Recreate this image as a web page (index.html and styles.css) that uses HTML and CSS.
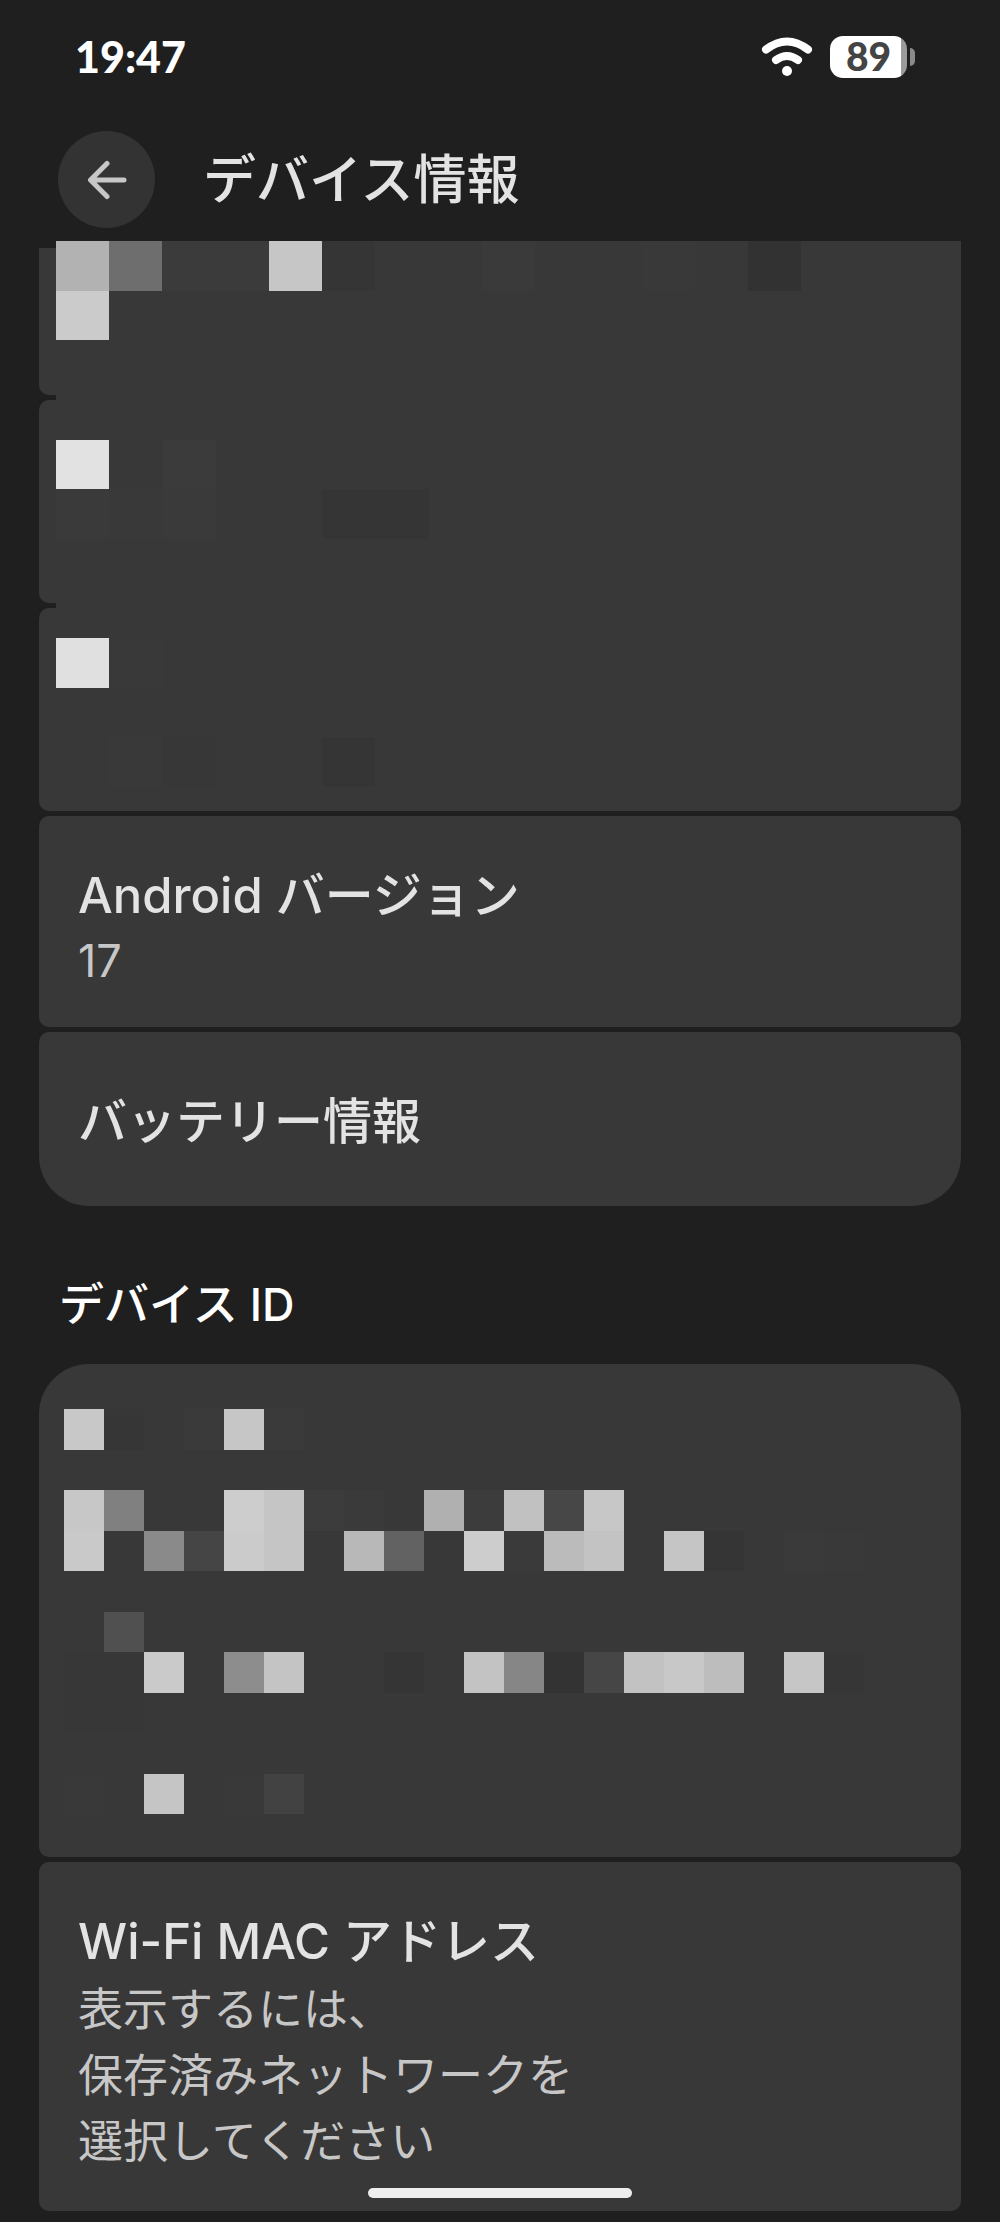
FILE: index.html
```html
<!DOCTYPE html>
<html lang="ja">
<head>
    <meta charset="UTF-8">
    <meta name="viewport" content="width=device-width, initial-scale=1.0">
    <title>デバイス情報</title>
    <link rel="stylesheet" href="styles.css">
</head>
<body>
    <div class="status-bar">
        <span class="clock">19:47</span>
        <div class="status-icons">
            <svg class="wifi" viewBox="0 0 52 40" aria-hidden="true">
                <path d="M5 12.5Q26 -3.500 47 12.5" />
                <path d="M15 23Q26 15 37 23" />
                <circle cx="26" cy="34" r="5" />
            </svg>
            <div class="battery">
                <div class="battery-body">89</div>
                <div class="battery-cap"></div>
            </div>
        </div>
    </div>

    <header class="header">
        <button class="back-button" type="button" aria-label="戻る">
            <svg viewBox="0 0 40 40" aria-hidden="true">
                <path d="M37 20H4M20 3.500L3.500 20L20 36.500" />
            </svg>
        </button>
        <h1>デバイス情報</h1>
    </header>

    <main class="content">
        <section class="group group-top">
            <div class="row row-hidden row-short"></div>
            <div class="row row-hidden"></div>
            <div class="row row-hidden"></div>
            <div class="row">
                <h3>Android バージョン</h3>
                <p class="value">17</p>
            </div>
            <div class="row row-last">
                <h3>バッテリー情報</h3>
            </div>
            <!-- masked values -->
            <svg class="mosaic-large" viewBox="0 0 17 11" preserveAspectRatio="none" aria-hidden="true">
                <rect width="17" height="11" fill="#383838" />
                <rect x="0" y="0" width="1" height="1" fill="#b2b2b2" />
                <rect x="1" y="0" width="1" height="1" fill="#6e6e6e" />
                <rect x="2" y="0" width="2" height="1" fill="#3b3b3b" />
                <rect x="4" y="0" width="1" height="1" fill="#c6c6c6" />
                <rect x="5" y="0" width="1" height="1" fill="#353535" />
                <rect x="8" y="0" width="1" height="1" fill="#3a3a3a" />
                <rect x="11" y="0" width="1" height="1" fill="#393939" />
                <rect x="13" y="0" width="1" height="1" fill="#323232" />
                <rect x="0" y="1" width="1" height="1" fill="#cbcbcb" />
                <rect x="0" y="4" width="1" height="1" fill="#e2e2e2" />
                <rect x="2" y="4" width="1" height="1" fill="#3b3b3b" />
                <rect x="0" y="5" width="1" height="1" fill="#3a3a3a" />
                <rect x="1" y="5" width="1" height="1" fill="#393939" />
                <rect x="2" y="5" width="1" height="1" fill="#3a3a3a" />
                <rect x="5" y="5" width="2" height="1" fill="#353535" />
                <rect x="0" y="8" width="1" height="1" fill="#e0e0e0" />
                <rect x="1" y="8" width="1" height="1" fill="#393939" />
                <rect x="1" y="10" width="1" height="1" fill="#393939" />
                <rect x="2" y="10" width="1" height="1" fill="#373737" />
                <rect x="5" y="10" width="1" height="1" fill="#353535" />
            </svg>
        </section>

        <h2>デバイス ID</h2>

        <section class="group">
            <div class="row row-first row-masked">
                <svg class="mosaic-small" viewBox="0 0 20 10" preserveAspectRatio="none" aria-hidden="true">
                    <rect x="0" y="0" width="1" height="1" fill="#c8c8c8" />
                    <rect x="1" y="0" width="1" height="1" fill="#363636" />
                    <rect x="3" y="0" width="1" height="1" fill="#3a3a3a" />
                    <rect x="4" y="0" width="1" height="1" fill="#c6c6c6" />
                    <rect x="5" y="0" width="1" height="1" fill="#3a3a3a" />

                    <rect x="0" y="2" width="1" height="1" fill="#c7c7c7" />
                    <rect x="1" y="2" width="1" height="1" fill="#808080" />
                    <rect x="4" y="2" width="1" height="1" fill="#cdcdcd" />
                    <rect x="5" y="2" width="1" height="1" fill="#c5c5c5" />
                    <rect x="6" y="2" width="1" height="1" fill="#3c3c3c" />
                    <rect x="7" y="2" width="1" height="1" fill="#3a3a3a" />
                    <rect x="9" y="2" width="1" height="1" fill="#b0b0b0" />
                    <rect x="10" y="2" width="1" height="1" fill="#3c3c3c" />
                    <rect x="11" y="2" width="1" height="1" fill="#c1c1c1" />
                    <rect x="12" y="2" width="1" height="1" fill="#474747" />
                    <rect x="13" y="2" width="1" height="1" fill="#c7c7c7" />

                    <rect x="0" y="3" width="1" height="1" fill="#c9c9c9" />
                    <rect x="2" y="3" width="1" height="1" fill="#8a8a8a" />
                    <rect x="3" y="3" width="1" height="1" fill="#454545" />
                    <rect x="4" y="3" width="1" height="1" fill="#cbcbcb" />
                    <rect x="5" y="3" width="1" height="1" fill="#c5c5c5" />
                    <rect x="7" y="3" width="1" height="1" fill="#b8b8b8" />
                    <rect x="8" y="3" width="1" height="1" fill="#626262" />
                    <rect x="10" y="3" width="1" height="1" fill="#cdcdcd" />
                    <rect x="11" y="3" width="1" height="1" fill="#3a3a3a" />
                    <rect x="12" y="3" width="1" height="1" fill="#bbbbbb" />
                    <rect x="13" y="3" width="1" height="1" fill="#c3c3c3" />
                    <rect x="15" y="3" width="1" height="1" fill="#c5c5c5" />
                    <rect x="16" y="3" width="1" height="1" fill="#353535" />
                    <rect x="18" y="3" width="1" height="1" fill="#3a3a3a" />
                    <rect x="19" y="3" width="1" height="1" fill="#393939" />

                    <rect x="1" y="5" width="1" height="1" fill="#505050" />

                    <rect x="0" y="6" width="2" height="1" fill="#373737" />
                    <rect x="2" y="6" width="1" height="1" fill="#cacaca" />
                    <rect x="4" y="6" width="1" height="1" fill="#8d8d8d" />
                    <rect x="5" y="6" width="1" height="1" fill="#c4c4c4" />
                    <rect x="8" y="6" width="1" height="1" fill="#353535" />
                    <rect x="10" y="6" width="1" height="1" fill="#c3c3c3" />
                    <rect x="11" y="6" width="1" height="1" fill="#868686" />
                    <rect x="12" y="6" width="1" height="1" fill="#333333" />
                    <rect x="13" y="6" width="1" height="1" fill="#464646" />
                    <rect x="14" y="6" width="1" height="1" fill="#c2c2c2" />
                    <rect x="15" y="6" width="1" height="1" fill="#c8c8c8" />
                    <rect x="16" y="6" width="1" height="1" fill="#bdbdbd" />
                    <rect x="18" y="6" width="1" height="1" fill="#c6c6c6" />
                    <rect x="19" y="6" width="1" height="1" fill="#363636" />

                    <rect x="0" y="7" width="2" height="1" fill="#373737" />

                    <rect x="0" y="9" width="1" height="1" fill="#393939" />
                    <rect x="2" y="9" width="1" height="1" fill="#c5c5c5" />
                    <rect x="4" y="9" width="1" height="1" fill="#393939" />
                    <rect x="5" y="9" width="1" height="1" fill="#424242" />
                </svg>
            </div>
            <div class="row">
                <h3>Wi-Fi MAC アドレス</h3>
                <p>表示するには、<br>保存済みネットワークを<br>選択してください</p>
            </div>
        </section>
    </main>

    <div class="home-indicator"></div>
</body>
</html>
```
FILE: styles.css
```css
* {
    margin: 0;
    padding: 0;
    box-sizing: border-box;
}

body {
    font-family: Inter, 'Noto Sans CJK JP', sans-serif;
    background: #1f1f1f;
    color: #e3e3e3;
}

.status-bar {
    display: flex;
    justify-content: space-between;
    align-items: center;
    height: 114px;
    padding: 0 85px 0 75px;
}

.clock {
    font-family: Lato, sans-serif;
    font-size: 43px;
    font-weight: 900;
    line-height: 42px;
    color: white;
}

.status-icons {
    display: flex;
    align-items: center;
    gap: 17px;
}

.wifi {
    width: 52px;
    height: 40px;
}

.wifi path {
    fill: none;
    stroke: white;
    stroke-width: 8;
    stroke-linecap: round;
}

.wifi circle {
    fill: white;
}

.battery {
    display: flex;
    align-items: center;
    gap: 3px;
}

.battery-body {
    width: 77px;
    height: 42px;
    border-radius: 13px;
    background: linear-gradient(to right, white 71px, #9b9b9b 71px);
    color: #444;
    font-family: Lato, sans-serif;
    font-size: 39px;
    font-weight: 900;
    line-height: 40px;
    text-align: center;
}

.battery-cap {
    width: 5px;
    height: 18px;
    border-radius: 0 5px 5px 0;
    background: #8a8a8a;
}

.header {
    display: flex;
    align-items: center;
    gap: 48px;
    padding: 17px 58px 20px;
}

.back-button {
    display: flex;
    align-items: center;
    justify-content: center;
    width: 97px;
    height: 97px;
    border: none;
    border-radius: 50%;
    background: #333;
    cursor: pointer;
}

.back-button svg {
    width: 40px;
    height: 40px;
    fill: none;
    stroke: #c7c7c7;
    stroke-width: 5;
    stroke-linecap: round;
    stroke-linejoin: round;
}

h1 {
    font-size: 53px;
    font-weight: 500;
    line-height: 72px;
}

.content {
    padding: 0 39px 11px;
}

.group {
    position: relative;
    display: flex;
    flex-direction: column;
    gap: 5px;
}

.row {
    padding: 47px 39px 36px;
    border-radius: 10px;
    background: #383838;
}

.row-hidden {
    height: 203px;
}

.row-short {
    height: 147px;
    border-radius: 0 0 10px 10px;
}

.row-first {
    border-radius: 50px 50px 10px 10px;
}

.row-last {
    padding: 57px 39px 51px;
    border-radius: 10px 10px 50px 50px;
}

.row-masked {
    padding: 45px 25px 43px;
}

h2 {
    padding: 66px 20px 26px;
    color: white;
    font-size: 45px;
    font-weight: 500;
    line-height: 66px;
}

h3 {
    font-size: 49px;
    font-weight: 500;
    line-height: 66px;
}

.row p {
    margin-top: 2px;
    color: #c7c7c7;
    font-size: 45px;
    line-height: 66px;
}

.row .value {
    line-height: 60px;
}

.mosaic-large {
    position: absolute;
    top: -7px;
    left: 17px;
    width: calc(100% - 17px);
    height: 546px;
    shape-rendering: crispEdges;
}

.mosaic-small {
    display: block;
    width: 800px;
    max-width: 100%;
    height: 405px;
    shape-rendering: crispEdges;
}

.home-indicator {
    position: fixed;
    bottom: 24px;
    left: 50%;
    width: 264px;
    height: 10px;
    margin-left: -132px;
    border-radius: 5px;
    background: #eee;
}
```
